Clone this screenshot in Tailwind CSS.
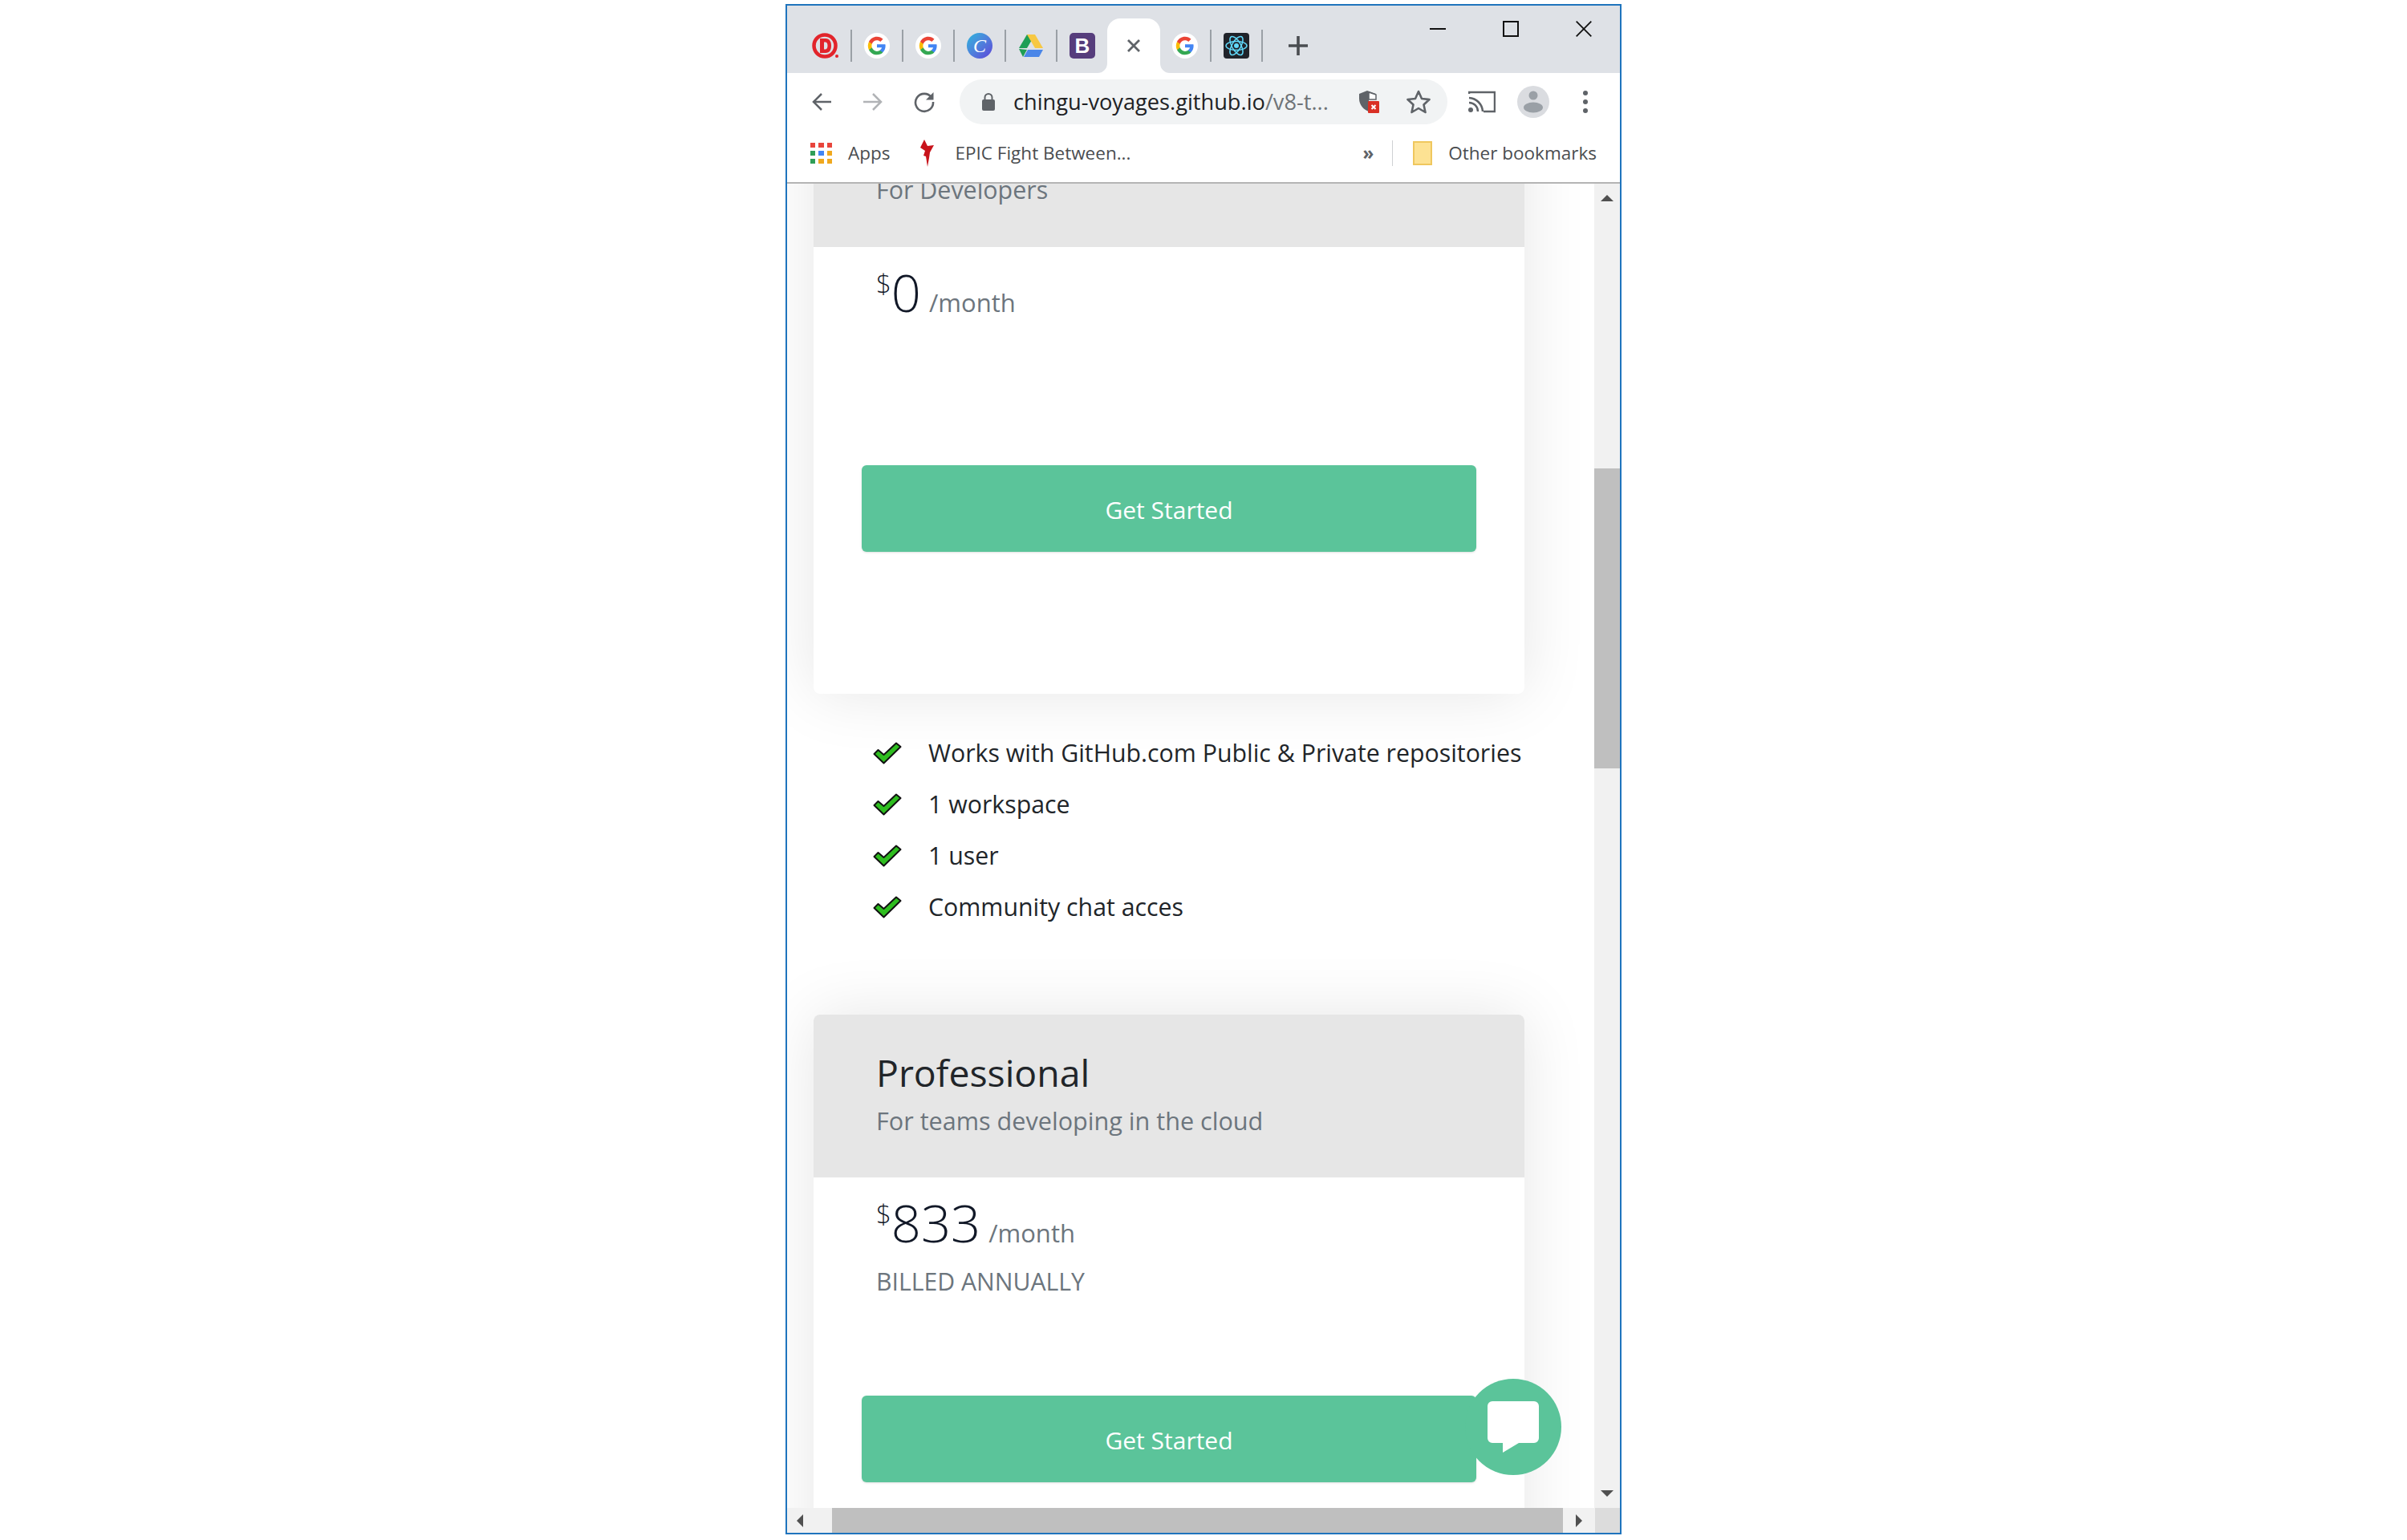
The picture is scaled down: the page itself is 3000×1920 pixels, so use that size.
<!DOCTYPE html>
<html lang="en">
<head>
  <meta charset="UTF-8">
  <meta name="viewport" content="width=device-width, initial-scale=1.0">
  <title>Pricing</title>
  <script src="https://cdn.jsdelivr.net/npm/@tailwindcss/browser@4"></script>
</head>
<body class="bg-white font-['Open_Sans',sans-serif]">
<div class="flex justify-center pt-[5px] h-[1920px]">
  <!-- browser window -->
  <div class="w-[1042px] h-[1908px] border-[2px] border-[#1f74bd] flex flex-col overflow-hidden bg-white">

    <!-- tab strip -->
    <div class="h-[84px] shrink-0 bg-[#dee1e6] flex items-start pl-[17px]">
      <div class="flex items-center h-[68px] mt-[16px]">
        <div class="w-[62px] flex justify-center">
          <svg width="34" height="36" viewBox="0 0 34 36"><circle cx="16" cy="18" r="13.500" fill="none" stroke="#e2242b" stroke-width="4.500"/><path d="M10 9h7c5 0 7 4 7 9s-2 9-7 9h-7z" fill="#e2242b"/><path d="M15 13.500h1.500c2 0 3 2 3 4.500s-1 4.500-3 4.500H15z" fill="#dee1e6"/><circle cx="31" cy="31" r="2" fill="#e2242b"/></svg>
        </div>
        <div class="w-[2px] h-10 bg-[#9aa0a6]"></div>
        <div class="w-[62px] flex justify-center">
          <svg width="32" height="32" viewBox="0 0 32 32"><circle cx="16" cy="16" r="16" fill="#fff"/><g transform="translate(16 16) scale(1.250) translate(-16 -16)"><path d="M24.500 16.200c0-.6-.1-1.200-.2-1.700H16v3.300h4.800c-.2 1.100-.8 2-1.800 2.600v2.200h2.900c1.700-1.600 2.600-3.800 2.600-6.400z" fill="#4285f4"/><path d="M16 25c2.400 0 4.400-.8 5.900-2.200L19 20.600c-.8.500-1.800.9-3 .9-2.300 0-4.300-1.600-5-3.700H8v2.300C9.500 23 12.500 25 16 25z" fill="#34a853"/><path d="M11 17.800c-.4-1.100-.4-2.400 0-3.600v-2.300H8c-1.300 2.500-1.300 5.600 0 8.200z" fill="#fbbc05"/><path d="M16 10.600c1.300 0 2.500.5 3.400 1.300l2.600-2.600C20.400 7.900 18.400 7 16 7c-3.500 0-6.500 2-8 4.900l3 2.300c.7-2.100 2.700-3.600 5-3.600z" fill="#ea4335"/></g></svg>
        </div>
        <div class="w-[2px] h-10 bg-[#9aa0a6]"></div>
        <div class="w-[62px] flex justify-center">
          <svg width="32" height="32" viewBox="0 0 32 32"><circle cx="16" cy="16" r="16" fill="#fff"/><g transform="translate(16 16) scale(1.250) translate(-16 -16)"><path d="M24.500 16.200c0-.6-.1-1.200-.2-1.700H16v3.300h4.800c-.2 1.100-.8 2-1.800 2.600v2.200h2.900c1.700-1.600 2.600-3.800 2.600-6.400z" fill="#4285f4"/><path d="M16 25c2.400 0 4.400-.8 5.900-2.200L19 20.600c-.8.500-1.800.9-3 .9-2.300 0-4.300-1.600-5-3.700H8v2.300C9.500 23 12.500 25 16 25z" fill="#34a853"/><path d="M11 17.800c-.4-1.100-.4-2.400 0-3.600v-2.300H8c-1.300 2.500-1.300 5.600 0 8.200z" fill="#fbbc05"/><path d="M16 10.600c1.300 0 2.500.5 3.400 1.300l2.600-2.600C20.400 7.900 18.400 7 16 7c-3.500 0-6.500 2-8 4.900l3 2.300c.7-2.100 2.700-3.600 5-3.600z" fill="#ea4335"/></g></svg>
        </div>
        <div class="w-[2px] h-10 bg-[#9aa0a6]"></div>
        <div class="w-[62px] flex justify-center">
          <div class="w-8 h-8 rounded-full bg-gradient-to-br from-[#1fb6dc] to-[#5b3fd8] flex items-center justify-center text-white italic font-['Liberation_Serif',serif] text-[24px] leading-none">C</div>
        </div>
        <div class="w-[2px] h-10 bg-[#9aa0a6]"></div>
        <div class="w-[62px] flex justify-center">
          <svg width="32" height="30" viewBox="0 0 32 30"><path d="M11 1h10L11 18H1z" fill="#1e9e55"/><path d="M11 1h10l10 17H21z" fill="#f7c843"/><path d="M7 29l5-9h19l-5 9z" fill="#4a86e8"/><path d="M1 19l5 10 5-9z" fill="#1e9e55"/></svg>
        </div>
        <div class="w-[2px] h-10 bg-[#9aa0a6]"></div>
        <div class="w-[62px] flex justify-center">
          <div class="w-8 h-8 rounded-[5px] bg-[#563d7c] flex items-center justify-center text-white font-bold font-['Liberation_Sans',sans-serif] text-[26px] leading-none">B</div>
        </div>
        <!-- active tab -->
        <div class="relative w-[66px] h-[68px] bg-white rounded-t-[16px] flex items-center justify-center">
          <svg class="absolute left-[-12px] bottom-0" width="12" height="12" viewBox="0 0 12 12"><path d="M12 0v12H0A12 12 0 0 0 12 0z" fill="#fff"/></svg>
          <svg class="absolute right-[-12px] bottom-0" width="12" height="12" viewBox="0 0 12 12"><path d="M0 0v12h12A12 12 0 0 1 0 0z" fill="#fff"/></svg>
          <svg width="18" height="18" viewBox="0 0 18 18"><path d="M2 2l14 14M16 2L2 16" stroke="#5f6368" stroke-width="2.800"/></svg>
        </div>
        <div class="w-[62px] flex justify-center">
          <svg width="32" height="32" viewBox="0 0 32 32"><circle cx="16" cy="16" r="16" fill="#fff"/><g transform="translate(16 16) scale(1.250) translate(-16 -16)"><path d="M24.500 16.200c0-.6-.1-1.200-.2-1.700H16v3.300h4.800c-.2 1.100-.8 2-1.800 2.600v2.200h2.900c1.700-1.600 2.600-3.800 2.600-6.400z" fill="#4285f4"/><path d="M16 25c2.400 0 4.400-.8 5.900-2.200L19 20.600c-.8.500-1.800.9-3 .9-2.300 0-4.300-1.600-5-3.700H8v2.300C9.500 23 12.500 25 16 25z" fill="#34a853"/><path d="M11 17.800c-.4-1.100-.4-2.400 0-3.600v-2.300H8c-1.300 2.500-1.300 5.600 0 8.200z" fill="#fbbc05"/><path d="M16 10.600c1.300 0 2.500.5 3.400 1.300l2.600-2.600C20.400 7.900 18.400 7 16 7c-3.500 0-6.500 2-8 4.900l3 2.300c.7-2.100 2.700-3.600 5-3.600z" fill="#ea4335"/></g></svg>
        </div>
        <div class="w-[2px] h-10 bg-[#9aa0a6]"></div>
        <div class="w-[62px] flex justify-center">
          <svg width="32" height="32" viewBox="0 0 32 32"><rect width="32" height="32" rx="4" fill="#20232a"/><g fill="none" stroke="#61dafb" stroke-width="1.500"><ellipse cx="16" cy="16" rx="13" ry="5.500"/><ellipse cx="16" cy="16" rx="13" ry="5.500" transform="rotate(60 16 16)"/><ellipse cx="16" cy="16" rx="13" ry="5.500" transform="rotate(120 16 16)"/></g><circle cx="16" cy="16" r="3" fill="#61dafb"/></svg>
        </div>
        <div class="w-[2px] h-10 bg-[#9aa0a6]"></div>
        <div class="w-[88px] flex justify-center">
          <svg width="26" height="26" viewBox="0 0 26 26"><path d="M13 1v24M1 13h24" stroke="#4a4d51" stroke-width="3.600"/></svg>
        </div>
      </div>
      <div class="ml-auto flex h-[58px] items-center">
        <div class="w-[91px] flex justify-center"><div class="w-5 h-[2px] bg-[#111]"></div></div>
        <div class="w-[91px] flex justify-center"><div class="w-5 h-5 border-2 border-[#111]"></div></div>
        <div class="w-[91px] flex justify-center">
          <svg width="20" height="20" viewBox="0 0 20 20"><path d="M.7.7l18.600 18.600M19.300.7L.7 19.300" stroke="#111" stroke-width="1.800"/></svg>
        </div>
      </div>
    </div>

    <!-- toolbar -->
    <div class="h-[69px] shrink-0 flex items-center pl-[11px] pt-[3px]">
      <div class="w-16 flex justify-center">
        <svg width="26" height="26" viewBox="0 0 26 26"><path d="M25 13H3M13 3L3 13l10 10" fill="none" stroke="#5f6368" stroke-width="2.500"/></svg>
      </div>
      <div class="w-16 flex justify-center">
        <svg width="26" height="26" viewBox="0 0 26 26"><path d="M1 13h22M13 3l10 10-10 10" fill="none" stroke="#b1b3b6" stroke-width="2.500"/></svg>
      </div>
      <div class="w-16 flex justify-center">
        <svg width="28" height="28" viewBox="0 0 28 28"><path d="M23 8.500A11 11 0 1 0 25 14" fill="none" stroke="#5f6368" stroke-width="2.600"/><path d="M25.500 2v9.500H16z" fill="#5f6368"/></svg>
      </div>
      <div class="w-[608px] h-[56px] ml-3 rounded-full bg-[#f1f3f4] flex items-center pl-[27px]">
        <svg width="18" height="24" viewBox="0 0 18 24"><path d="M4.500 10V6.500a4.500 4.500 0 0 1 9 0V10" fill="none" stroke="#5f6368" stroke-width="2"/><rect x="1" y="9" width="16" height="14" rx="2" fill="#5f6368"/></svg>
        <span class="ml-[22px] text-[27.200px] leading-none text-[#202124] whitespace-nowrap">chingu-voyages.github.io<span class="text-[#6f7377]">/v8-t...</span></span>
        <svg class="ml-[36px]" width="28" height="32" viewBox="0 0 28 32"><path d="M12 2l11 4v7H14v15c-6-2-12-8-12-16V6z" fill="#5f6368"/><path d="M14 4l9 3v6h-9z" fill="#fff" stroke="#5f6368" stroke-width="1.500"/><rect x="13" y="15" width="14" height="15" rx="1" fill="#d93025"/><path d="M17.500 20l5 5M22.500 20l-5 5" stroke="#fff" stroke-width="2"/></svg>
        <svg class="ml-[32px]" width="32" height="32" viewBox="0 0 32 32"><path d="M16 3l4 9 9.500 1-7 6.500 2 9.500-8.500-5-8.500 5 2-9.500-7-6.500 9.500-1z" fill="none" stroke="#5f6368" stroke-width="2.600" stroke-linejoin="round"/></svg>
      </div>
      <div class="w-16 ml-[11px] flex justify-center">
        <svg width="34" height="28" viewBox="0 0 34 28"><path d="M1 4V2h32v24H19" fill="none" stroke="#5f6368" stroke-width="2.500"/><path d="M1 9a18 18 0 0 1 17 17M1 15a11 11 0 0 1 11 11" fill="none" stroke="#5f6368" stroke-width="2.500"/><circle cx="3" cy="24" r="3" fill="#5f6368"/></svg>
      </div>
      <div class="w-16 flex justify-center">
        <svg width="40" height="40" viewBox="0 0 40 40"><circle cx="20" cy="20" r="20" fill="#dadce0"/><circle cx="20" cy="12" r="5.500" fill="#9aa0a6"/><ellipse cx="20" cy="27" rx="12" ry="6.500" fill="#9aa0a6"/></svg>
      </div>
      <div class="w-16 ml-[1px] flex flex-col items-center gap-[5px]">
        <div class="w-[6px] h-[6px] rounded-full bg-[#5f6368]"></div>
        <div class="w-[6px] h-[6px] rounded-full bg-[#5f6368]"></div>
        <div class="w-[6px] h-[6px] rounded-full bg-[#5f6368]"></div>
      </div>
    </div>

    <!-- bookmarks bar -->
    <div class="h-[69px] shrink-0 flex items-center pl-[29px] pr-[29px] pb-[6px] border-b-[2px] border-[#b4b4b4] text-[22.500px] text-[#4a4d50]">
      <div class="grid grid-cols-3 gap-[4px] w-[27px]">
        <div class="h-[6px] bg-[#e8453c]"></div><div class="h-[6px] bg-[#e8453c]"></div><div class="h-[6px] bg-[#e8453c]"></div>
        <div class="h-[6px] bg-[#2f9e57]"></div><div class="h-[6px] bg-[#4285f4]"></div><div class="h-[6px] bg-[#f0a81e]"></div>
        <div class="h-[6px] bg-[#2f9e57]"></div><div class="h-[6px] bg-[#f0a81e]"></div><div class="h-[6px] bg-[#f0a81e]"></div>
      </div>
      <span class="ml-[20px]">Apps</span>
      <svg class="ml-[38px]" width="18" height="34" viewBox="0 0 18 34"><path d="M5 0l4 8 8-1-5 9-1 7-2 11-2-13-3-1 2-6-6-4z" fill="#c8131b"/></svg>
      <span class="ml-[25px]">EPIC Fight Between...</span>
      <span class="ml-auto text-[#5f6368] font-bold">»</span>
      <div class="w-[1px] h-[32px] bg-[#cfd1d3] ml-[23px]"></div>
      <svg class="ml-[25px]" width="24" height="30" viewBox="0 0 24 30"><path d="M1 1h22v28H1z" fill="#fde293" stroke="#efc75e" stroke-width="2"/></svg>
      <span class="ml-[20px]">Other bookmarks</span>
    </div>

    <!-- page and scrollbars -->
    <div class="flex-1 flex min-h-0">
      <div class="relative flex-1 overflow-hidden">
        <div class="pl-[33px] mt-[-124px] w-[919px]">

          <!-- free plan -->
          <div class="w-[886px] rounded-[8px] bg-white shadow-[0_0_80px_rgba(0,0,0,0.1)] overflow-hidden">
            <div class="h-[203px] bg-[#e6e6e6] pl-[78px] pt-[40px]">
              <div class="text-[46.400px] leading-[64px] text-[#212529]">Free</div>
              <div class="mt-[6px] text-[30.400px] leading-[44px] text-[#6c757d]">For Developers</div>
            </div>
            <div class="h-[557px] pt-[18px]">
              <div class="pl-[78px] flex items-baseline h-[76px] text-[#111827]">
                <span class="text-[33px] font-light self-start leading-[40px] mt-[8px]">$</span>
                <span class="text-[65px] font-[350] leading-[76px]">0</span>
                <span class="ml-[10px] text-[31px] text-[#6c757d] leading-[70px]">/month</span>
              </div>
              <div class="ml-[60px] mt-[178px] w-[766px] h-[108px] pt-[2px] rounded-[6px] bg-[#5bc49a] shadow-sm flex items-center justify-center text-white text-[30px]">Get Started</div>
            </div>
          </div>

          <!-- features -->
          <ul class="h-[400px] pt-[42px] pl-[74px] text-[30.300px] text-[#212529]">
            <li class="h-[64px] flex items-center">
              <svg width="36" height="28" viewBox="0 0 36 28"><path d="M1.500 15l5-5 7 6L29 1.500l5.500 4.500L13.500 26.500z" fill="#2ebd1f" stroke="#111" stroke-width="2" stroke-linejoin="round"/></svg>
              <span class="ml-[33px] whitespace-nowrap">Works with GitHub.com Public &amp; Private repositories</span>
            </li>
            <li class="h-[64px] flex items-center">
              <svg width="36" height="28" viewBox="0 0 36 28"><path d="M1.500 15l5-5 7 6L29 1.500l5.500 4.500L13.500 26.500z" fill="#2ebd1f" stroke="#111" stroke-width="2" stroke-linejoin="round"/></svg>
              <span class="ml-[33px]">1 workspace</span>
            </li>
            <li class="h-[64px] flex items-center">
              <svg width="36" height="28" viewBox="0 0 36 28"><path d="M1.500 15l5-5 7 6L29 1.500l5.500 4.500L13.500 26.500z" fill="#2ebd1f" stroke="#111" stroke-width="2" stroke-linejoin="round"/></svg>
              <span class="ml-[33px]">1 user</span>
            </li>
            <li class="h-[64px] flex items-center">
              <svg width="36" height="28" viewBox="0 0 36 28"><path d="M1.500 15l5-5 7 6L29 1.500l5.500 4.500L13.500 26.500z" fill="#2ebd1f" stroke="#111" stroke-width="2" stroke-linejoin="round"/></svg>
              <span class="ml-[33px]">Community chat acces</span>
            </li>
          </ul>

          <!-- professional plan -->
          <div class="w-[886px] rounded-[8px] bg-white shadow-[0_0_80px_rgba(0,0,0,0.1)] overflow-hidden">
            <div class="h-[203px] bg-[#e6e6e6] pl-[78px] pt-[40px]">
              <div class="text-[46.400px] leading-[64px] text-[#212529]">Professional</div>
              <div class="mt-[6px] text-[30.600px] leading-[44px] text-[#6c757d]">For teams developing in the cloud</div>
            </div>
            <div class="h-[557px] pt-[18px]">
              <div class="pl-[78px] flex items-baseline h-[76px] text-[#111827]">
                <span class="text-[33px] font-light self-start leading-[40px] mt-[8px]">$</span>
                <span class="text-[65px] font-[350] leading-[76px]">833</span>
                <span class="ml-[10px] text-[31px] text-[#6c757d] leading-[70px]">/month</span>
              </div>
              <div class="pl-[78px] mt-[14px] text-[30.200px] leading-[44px] text-[#6c757d]">BILLED ANNUALLY</div>
              <div class="ml-[60px] mt-[120px] w-[766px] h-[108px] pt-[2px] rounded-[6px] bg-[#5bc49a] shadow-sm flex items-center justify-center text-white text-[30px]">Get Started</div>
            </div>
          </div>
        </div>

        <!-- chat bubble -->
        <div class="absolute left-[845px] bottom-[41px] w-[120px] h-[120px] rounded-full bg-[#5bc49a] flex items-center justify-center">
          <svg width="66" height="66" viewBox="0 0 66 66"><path d="M7 1h52a6 6 0 0 1 6 6v40a6 6 0 0 1-6 6H40L20 65V53H7a6 6 0 0 1-6-6V7a6 6 0 0 1 6-6z" fill="#fff"/></svg>
        </div>
      </div>

      <!-- vertical scrollbar -->
      <div class="w-[32px] shrink-0 bg-[#f1f1f1] flex flex-col items-center">
        <div class="h-[36px] flex items-center justify-center">
          <div class="w-0 h-0 border-x-[8px] border-x-transparent border-b-[8px] border-b-[#505050]"></div>
        </div>
        <div class="w-full h-[374px] mt-[319px] bg-[#bfbfbf]"></div>
        <div class="mt-auto h-[36px] flex items-center justify-center">
          <div class="w-0 h-0 border-x-[8px] border-x-transparent border-t-[8px] border-t-[#505050]"></div>
        </div>
      </div>
    </div>

    <!-- horizontal scrollbar -->
    <div class="h-[31px] shrink-0 flex bg-[#f1f1f1] items-center">
      <div class="w-[56px] flex justify-start pl-[12px]">
        <div class="w-0 h-0 border-y-[8px] border-y-transparent border-r-[8px] border-r-[#505050]"></div>
      </div>
      <div class="w-[911px] h-full bg-[#bfbfbf]"></div>
      <div class="w-[40px] flex justify-center">
        <div class="w-0 h-0 border-y-[8px] border-y-transparent border-l-[8px] border-l-[#505050]"></div>
      </div>
      <div class="flex-1 h-full bg-[#dcdcdc]"></div>
    </div>
  </div>
</div>
</body>
</html>
